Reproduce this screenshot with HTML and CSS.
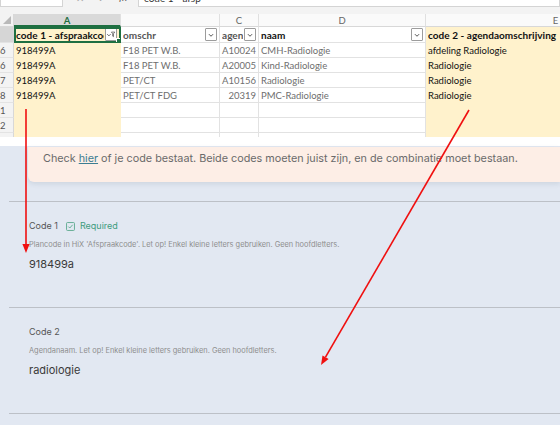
FILE: index.html
```html
<!DOCTYPE html>
<html lang="nl">
<head>
    <meta charset="UTF-8">
    <meta name="viewport" content="width=device-width, initial-scale=1.0">
    <title>Code controle</title>
    <link rel="stylesheet" href="styles.css">
</head>
<body>
    <div class="page">
        <div class="excel">
            <div class="formula-bar">
                <div class="name-box">A1</div>
                <div class="fx-tools"><span>✕</span><span>✓</span></div>
                <div class="fx">fx</div>
                <div class="formula">code 1 - afsp</div>
            </div>

            <div class="sheet">
                <!-- kolomkoppen -->
                <div class="corner"></div>
                <div class="col-head sel">A</div>
                <div class="col-head"></div>
                <div class="col-head">C</div>
                <div class="col-head">D</div>
                <div class="col-head">E</div>

                <!-- tabelkop -->
                <div class="rh sel"></div>
                <div class="c a th active">
                    <span class="t">code 1 - afspraakcode</span>
                    <span class="dd"><svg viewBox="0 0 12 12"><path d="M1.5 5l2 2 2-2" fill="none" stroke="#444" stroke-width="1"/><path d="M6.5 2.5h4l-1.5 2v3.5l-1-.6v-2.9z" fill="none" stroke="#444" stroke-width="0.8"/></svg></span>
                </div>
                <div class="c th muted"><span class="t">omschr</span><span class="dd"><svg viewBox="0 0 12 12"><path d="M3.5 5l2.5 2.5 2.5-2.5" fill="none" stroke="#444" stroke-width="1.1"/></svg></span></div>
                <div class="c th muted"><span class="t">agen</span><span class="dd"><svg viewBox="0 0 12 12"><path d="M3.5 5l2.5 2.5 2.5-2.5" fill="none" stroke="#444" stroke-width="1.1"/></svg></span></div>
                <div class="c th"><span class="t">naam</span><span class="dd"><svg viewBox="0 0 12 12"><path d="M3.5 5l2.5 2.5 2.5-2.5" fill="none" stroke="#444" stroke-width="1.1"/></svg></span></div>
                <div class="c e th"><span class="t">code 2 - agendaomschrijving</span></div>

                <!-- rijen -->
                <div class="rh">6</div>
                <div class="c a">918499A</div>
                <div class="c muted">F18 PET W.B.</div>
                <div class="c muted num">A10024</div>
                <div class="c muted">CMH-Radiologie</div>
                <div class="c e">afdeling Radiologie</div>

                <div class="rh">6</div>
                <div class="c a">918499A</div>
                <div class="c muted">F18 PET W.B.</div>
                <div class="c muted num">A20005</div>
                <div class="c muted">Kind-Radiologie</div>
                <div class="c e">Radiologie</div>

                <div class="rh">7</div>
                <div class="c a">918499A</div>
                <div class="c muted">PET/CT</div>
                <div class="c muted num">A10156</div>
                <div class="c muted">Radiologie</div>
                <div class="c e">Radiologie</div>

                <div class="rh">8</div>
                <div class="c a">918499A</div>
                <div class="c muted">PET/CT FDG</div>
                <div class="c muted num">20319</div>
                <div class="c muted">PMC-Radiologie</div>
                <div class="c e">Radiologie</div>

                <div class="rh">1</div>
                <div class="c a"></div>
                <div class="c"></div>
                <div class="c"></div>
                <div class="c"></div>
                <div class="c e"></div>

                <div class="rh">2</div>
                <div class="c a"></div>
                <div class="c"></div>
                <div class="c"></div>
                <div class="c"></div>
                <div class="c e"></div>

                <div class="rh">3</div>
                <div class="c a"></div>
                <div class="c"></div>
                <div class="c"></div>
                <div class="c"></div>
                <div class="c e"></div>
            </div>
        </div>

        <main class="form">
            <div class="notice">
                Check <a href="#">hier</a> of je code bestaat. Beide codes moeten juist zijn, en de combinatie moet bestaan.
            </div>

            <section class="field">
                <div class="field-label">
                    Code 1
                    <span class="req">
                        <svg viewBox="0 0 10 10"><rect x="0.6" y="0.6" width="8.8" height="8.8" rx="1" fill="none" stroke="#5aa88c" stroke-width="1"/><path d="M2.6 5.1l1.6 1.6 3.2-3.6" fill="none" stroke="#5aa88c" stroke-width="1"/></svg>
                        Required
                    </span>
                </div>
                <p class="help">Plancode in HiX 'Afspraakcode'. Let op! Enkel kleine letters gebruiken. Geen hoofdletters.</p>
                <div class="value">918499a</div>
            </section>

            <section class="field">
                <div class="field-label">Code 2</div>
                <p class="help">Agendanaam. Let op! Enkel kleine letters gebruiken. Geen hoofdletters.</p>
                <div class="value">radiologie</div>
            </section>

            <section class="field"></section>
        </main>

        <!-- rode pijlen over de schermafdruk -->
        <svg class="arrows" viewBox="0 0 560 425">
            <line x1="26" y1="109" x2="26" y2="245" stroke="#f01010" stroke-width="1.6"/>
            <polygon points="22.4,244 29.6,244 26,253" fill="#f01010"/>
            <line x1="469" y1="110" x2="325.5" y2="357.2" stroke="#f01010" stroke-width="1.6"/>
            <polygon points="328.6,359 322.5,355.4 321,365" fill="#f01010"/>
        </svg>
    </div>
</body>
</html>
```

FILE: styles.css
```css
body {
    margin: 0;
    background-color: #e2e8f2;
    font-family: 'Inter', 'Noto Sans', sans-serif;
}

.page {
    position: relative;
    width: 560px;
    height: 425px;
    overflow: hidden;
}

/* ---------- Excel ---------- */

.excel {
    background-color: #fff;
    height: 146px;
    overflow: hidden;
    font-family: 'Lato', 'Liberation Sans', sans-serif;
}

.formula-bar {
    display: flex;
    align-items: flex-end;
    gap: 5px;
    height: 7px;
    overflow: hidden;
    background-color: #f3f3f3;
    border-bottom: 7px solid #f3f3f3;
}

.name-box,
.fx-tools,
.formula {
    height: 18px;
    background-color: #fff;
    border: 1px solid #d4d4d4;
    box-sizing: border-box;
    font-size: 10px;
    line-height: 16px;
    color: #333;
    flex-shrink: 0;
}

.name-box {
    width: 63px;
    padding-left: 4px;
    color: #fff;
}

.fx-tools {
    width: 46px;
    display: flex;
    justify-content: space-around;
    color: #aaa;
    border-color: #f3f3f3;
    background-color: #f3f3f3;
}

.fx {
    width: 14px;
    font-size: 10px;
    font-style: italic;
    line-height: 16px;
    height: 18px;
    color: #555;
}

.formula {
    flex: 1;
    padding-left: 5px;
}

.sheet {
    display: grid;
    grid-template-columns: 14px 107px 99px 39px 167px 260px;
    grid-template-rows: 13px 16px repeat(7, 15px);
    width: 686px;
    height: 123px;
    overflow: hidden;
    font-size: 9.5px;
}

.corner {
    background-color: #f3f3f3;
    border-right: 1px solid #d8d8d8;
    border-bottom: 1px solid #d8d8d8;
    position: relative;
}

.corner::after {
    content: '';
    position: absolute;
    right: 2px;
    bottom: 2px;
    border-left: 8px solid transparent;
    border-bottom: 8px solid #b9b9b9;
}

.col-head {
    background-color: #fafafa;
    border-right: 1px solid #e0e0e0;
    border-bottom: 1px solid #d8d8d8;
    text-align: center;
    color: #666;
    font-size: 9.5px;
    line-height: 13px;
}

.col-head.sel {
    background-color: #d9d9d9;
    color: #1e6f41;
    font-weight: bold;
    border-bottom: 2px solid #1e6f41;
}

.rh {
    background-color: #f3f3f3;
    border-right: 1px solid #d8d8d8;
    border-bottom: 1px solid #e3e3e3;
    text-align: right;
    padding-right: 8px;
    color: #555;
    line-height: 15px;
    overflow: hidden;
}

.rh.sel {
    background-color: #d6d6d6;
    line-height: 16px;
}

.c {
    border-right: 1px solid #e2e2e2;
    border-bottom: 1px solid #e2e2e2;
    padding: 0 2px;
    line-height: 15px;
    white-space: nowrap;
    overflow: hidden;
    color: #111;
    min-width: 0;
}

.c.a,
.c.e {
    background-color: #fff2cc;
    border-color: #fff2cc;
}

.c.muted {
    color: #6e6e6e;
}

.c.num {
    text-align: right;
}

.th {
    display: flex;
    align-items: center;
    justify-content: space-between;
    font-weight: bold;
    font-size: 10px;
    letter-spacing: 0.05px;
    line-height: 16px;
    color: #111;
}

.th.muted {
    color: #555;
}

.th .t {
    overflow: hidden;
    white-space: nowrap;
    flex: 1;
    min-width: 0;
}

.dd {
    flex-shrink: 0;
    width: 10px;
    height: 11px;
    background-color: #fff;
    border: 1px solid #9c9c9c;
    border-radius: 1px;
    display: flex;
    align-items: center;
    justify-content: center;
    margin-left: 1px;
}

.dd svg {
    width: 10px;
    height: 10px;
}

.th.active {
    position: relative;
    outline: 2px solid #1e6f41;
    outline-offset: -2px;
    padding-right: 3px;
}

.th.active::after {
    content: '';
    position: absolute;
    right: -2px;
    bottom: -2px;
    width: 4px;
    height: 4px;
    background-color: #1e6f41;
    border: 1px solid #fff;
}

/* ---------- formulier ---------- */

.form {
    padding-top: 1px;
}

.notice {
    margin-left: 28px;
    padding: 5px 0 16px 15px;
    line-height: 14px;
    font-size: 10.8px;
    color: #6a6a6a;
    background-color: #fdeee6;
    border-radius: 0 0 0 6px;
    box-shadow: 0 2px 5px rgba(60, 70, 90, 0.12);
    white-space: nowrap;
}

.notice a {
    color: #3c7d92;
}

.field {
    margin: 19px 0 0 9px;
    padding: 18px 0 0 20px;
    height: 106px;
    box-sizing: border-box;
    border-top: 1.5px solid #bcc0c7;
}

.field + .field {
    margin-top: 0;
}

.field-label {
    display: flex;
    align-items: center;
    gap: 8px;
    font-size: 9px;
    line-height: 12px;
    color: #555;
}

.req {
    display: flex;
    align-items: center;
    gap: 5px;
    color: #3f9c7e;
    font-size: 9px;
}

.req svg {
    width: 9px;
    height: 9px;
}

.help {
    margin: 7.5px 0 0;
    font-size: 7.4px;
    line-height: 9px;
    color: #8e8e8e;
    white-space: nowrap;
}

.value {
    margin-top: 8.5px;
    font-size: 11px;
    line-height: 14px;
    color: #3a3a3a;
}

.arrows {
    position: absolute;
    top: 0;
    left: 0;
    width: 560px;
    height: 425px;
    pointer-events: none;
}
```
